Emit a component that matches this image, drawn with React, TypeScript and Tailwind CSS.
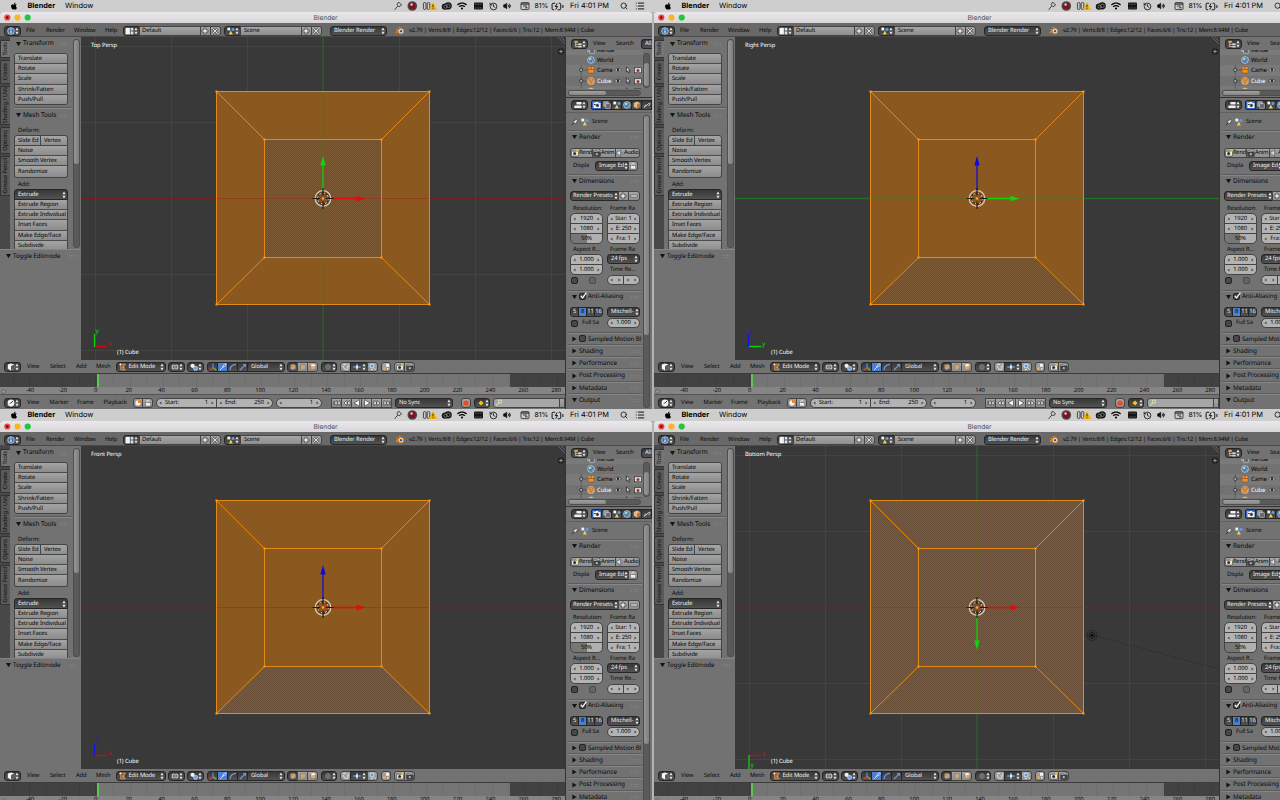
import React from "react";
import { FaApple, FaWifi } from "react-icons/fa";
import { Search, History, Volume2, List, BatteryCharging } from "lucide-react";

type View = "top" | "right" | "front" | "bottom";

const RED = "#e60a0a";
const GREEN = "#0ad80a";
const BLUE = "#0a0ae0";

/* ---------- small building blocks ---------- */

function Ico({ children, w = 8 }: { children: React.ReactNode; w?: number }) {
  return (
    <svg width={w} height={8} viewBox={`0 0 ${w} 8`} className="block shrink-0">
      {children}
    </svg>
  );
}

function UpDown() {
  return (
    <svg width={4} height={8} viewBox="0 0 4 8" className="ml-auto block shrink-0">
      <path d="M2 0.6L3.6 3.2H0.4ZM2 7.4L3.6 4.8H0.4Z" fill="#e4e4e4" />
    </svg>
  );
}

function Tri({ open = false }: { open?: boolean }) {
  return (
    <svg width={5} height={6} viewBox="0 0 5 6" className="block shrink-0">
      <path d={open ? "M0 1H5L2.5 5.2Z" : "M0.4 0.6V5.4L4.6 3Z"} fill="#141414" />
    </svg>
  );
}

function Dots() {
  return (
    <svg width={7} height={4} viewBox="0 0 7 4" className="ml-auto block shrink-0">
      <path d="M0 1.5H7M0 3.5H7" stroke="#8c8c8c" strokeWidth="0.7" strokeDasharray="1 1" />
    </svg>
  );
}

function Chevron({ right = false }: { right?: boolean }) {
  return (
    <svg width={3} height={4} viewBox="0 0 3 4" className="block shrink-0">
      <path d={right ? "M0.5 0.4V3.6L2.6 2Z" : "M2.5 0.4V3.6L0.4 2Z"} fill="#4c4c4c" />
    </svg>
  );
}

function Dark({ className, children }: { className: string; children?: React.ReactNode }) {
  return (
    <div
      className={`box-border flex h-[10px] shrink-0 items-center whitespace-nowrap border border-[#262626] bg-linear-to-b from-[#383838] to-[#525252] text-[#f0f0f0] ${className}`}
    >
      {children}
    </div>
  );
}

function Light({ className, children }: { className: string; children?: React.ReactNode }) {
  return (
    <div
      className={`box-border flex h-[10px] shrink-0 items-center whitespace-nowrap border border-[#444] bg-linear-to-b from-[#a6a6a6] to-[#8e8e8e] text-black ${className}`}
    >
      {children}
    </div>
  );
}

function Num({ label, value, className }: { label?: string; value: string; className: string }) {
  return (
    <div
      className={`box-border flex h-[10px] shrink-0 items-center whitespace-nowrap border border-[#444] bg-[#b3b3b3] px-[2px] text-black ${className}`}
    >
      <Chevron />
      {label ? <span className="ml-[3px]">{label}</span> : null}
      <span className={label ? "ml-auto mr-[3px]" : "mx-auto"}>{value}</span>
      <Chevron right />
    </div>
  );
}

function Check({ on = false, dim = false }: { on?: boolean; dim?: boolean }) {
  return (
    <div
      className={
        dim
          ? "flex h-[7px] w-[7px] shrink-0 rounded-[2px] border border-[#4a4a4a] bg-[#656565]"
          : "flex h-[7px] w-[7px] shrink-0 rounded-[2px] border border-[#222] bg-[#484848]"
      }
    >
      {on ? (
        <svg width={8} height={8} viewBox="0 0 8 8" className="-mt-[2px] block shrink-0 overflow-visible">
          <path d="M0.8 4L2.6 5.8L6.4 0.6" stroke="#fff" strokeWidth="1.2" fill="none" />
        </svg>
      ) : null}
    </div>
  );
}

/* ---------- icons ---------- */

const CameraIcon = () => (
  <Ico>
    <rect x="0.5" y="2.2" width="7" height="4.8" rx="0.6" fill="#e8e8e8" stroke="#222" strokeWidth="0.5" />
    <circle cx="3.6" cy="4.6" r="1.5" fill="#333" />
    <circle cx="6.4" cy="1.8" r="1.3" fill="#f2c018" />
  </Ico>
);
const RenderCam = () => (
  <Ico>
    <path d="M0.5 1V7H7.5V2H5.4V1H2.4V2H1.4V1Z" fill="#f4f4f4" />
    <circle cx="4.4" cy="4.4" r="1.6" fill="#333" stroke="#999" strokeWidth="0.5" />
    <rect x="1" y="3" width="1.6" height="1" fill="#333" />
  </Ico>
);
const ClapIcon = () => (
  <Ico>
    <path d="M0.6 1.8L7 0.6V2.2L0.8 3.2Z" fill="#ddd" stroke="#222" strokeWidth="0.5" />
    <rect x="0.8" y="3.2" width="6.4" height="4" fill="#444" stroke="#222" strokeWidth="0.5" />
    <circle cx="3.8" cy="5.2" r="1.1" fill="#bbb" />
  </Ico>
);
const SpeakerIcon = () => (
  <Ico>
    <path d="M0.6 2.8H2.4L4.6 0.8V7.2L2.4 5.2H0.6Z" fill="#e6e6e6" stroke="#333" strokeWidth="0.5" />
    <path d="M5.6 2.4Q6.8 4 5.6 5.6" stroke="#3f7ee0" strokeWidth="0.9" fill="none" />
  </Ico>
);
const SceneIcon = () => (
  <Ico>
    <rect x="0.4" y="0.6" width="2.8" height="2.8" fill="#f4f4f4" />
    <circle cx="6" cy="2.4" r="1.6" fill="#5a9ae8" />
    <path d="M3.8 3.6L5.8 7.4H1.8Z" fill="#f0d050" />
  </Ico>
);
const CubeIcon = () => (
  <Ico>
    <path d="M4 0.6L7.2 1.6V5.8L4 7.4L0.8 5.8V1.6Z" fill="#f6f6f6" />
    <path d="M4 3V7.4L7.2 5.8V1.6Z" fill="#5a5a5a" />
  </Ico>
);
const InfoIcon = () => (
  <Ico>
    <circle cx="4" cy="4" r="3.3" fill="#3c6fb6" stroke="#dfe8f5" strokeWidth="0.7" />
    <path d="M4 3.6V6M4 1.8V2.7" stroke="#fff" strokeWidth="1.1" />
  </Ico>
);
const ClockIcon = () => (
  <Ico>
    <circle cx="4" cy="4" r="3.4" fill="#f2f2f2" />
    <path d="M4 4L6 2" stroke="#222" strokeWidth="0.9" />
    <path d="M4 4L2.6 4.8" stroke="#c02020" strokeWidth="0.9" />
  </Ico>
);
const WorldIcon = () => (
  <Ico>
    <circle cx="4" cy="4" r="3.4" fill="#4f7fae" stroke="#c9d6e2" strokeWidth="0.7" />
    <path d="M2 2.4Q4 1 4.6 3Q3.4 4.6 2.2 4ZM5 4.6Q6.4 4.4 5.6 6Z" fill="#bfe0a8" />
  </Ico>
);
const OrangeCam = () => (
  <Ico>
    <circle cx="2.6" cy="2" r="1.6" fill="#f39a3c" stroke="#7a3c00" strokeWidth="0.4" />
    <circle cx="5.6" cy="2" r="1.6" fill="#f39a3c" stroke="#7a3c00" strokeWidth="0.4" />
    <rect x="1" y="3.4" width="6" height="3.6" fill="#ef8f2e" stroke="#7a3c00" strokeWidth="0.4" />
  </Ico>
);
const MeshIcon = () => (
  <Ico>
    <circle cx="4" cy="4" r="3.9" fill="#c9a684" />
    <path d="M1.2 1.8L6.8 1.8L4 7ZM1.2 1.8L4 4L6.8 1.8M4 4V7" stroke="#d9781a" strokeWidth="0.9" fill="none" />
  </Ico>
);
const OrangeCube = () => (
  <Ico>
    <path d="M4 0.6L7.2 2V5.8L4 7.4L0.8 5.8V2Z" fill="#e8b888" />
    <path d="M4 3.4V7.4L7.2 5.8V2Z" fill="#b8743c" />
  </Ico>
);
const Eye = () => (
  <Ico>
    <path d="M0.4 4Q4 0.4 7.6 4Q4 7 0.4 4Z" fill="#eee" stroke="#222" strokeWidth="0.6" />
    <circle cx="4" cy="3.8" r="1.3" fill="#222" />
  </Ico>
);
const Cursor = () => (
  <Ico>
    <path d="M2.4 0.8V6L3.7 5L4.8 7.2L5.8 6.6L4.8 4.6H6.2Z" fill="#ddd" stroke="#1a1a1a" strokeWidth="0.7" />
  </Ico>
);
const SmallCam = () => (
  <Ico>
    <rect x="0.6" y="1.8" width="6.8" height="5" fill="#ddd" stroke="#222" strokeWidth="0.6" />
    <circle cx="4" cy="4.4" r="1.5" fill="#8b3a30" />
  </Ico>
);
const Plus = () => (
  <Ico>
    <path d="M3 1H5V3H7V5H5V7H3V5H1V3H3Z" fill="#e6e6e6" stroke="#333" strokeWidth="0.6" />
  </Ico>
);
const Cross = () => (
  <Ico>
    <path d="M1.4 1.4L6.6 6.6M6.6 1.4L1.4 6.6" stroke="#333" strokeWidth="2.4" />
    <path d="M1.4 1.4L6.6 6.6M6.6 1.4L1.4 6.6" stroke="#e6e6e6" strokeWidth="1.2" />
  </Ico>
);
const LayoutIcon = () => (
  <Ico w={9}>
    <rect x="0.5" y="0.8" width="4.4" height="6.6" fill="#f2f2f2" />
    <rect x="5.6" y="0.8" width="2.8" height="2.8" fill="#ddd" />
    <rect x="5.6" y="4.4" width="2.8" height="3" fill="#ddd" />
  </Ico>
);
const TreeIcon = () => (
  <Ico>
    <rect x="0.4" y="0.8" width="3.4" height="2" fill="#f0a848" />
    <path d="M1.6 2.8V6.6H4M1.6 4.4H4" stroke="#ddd" strokeWidth="0.7" fill="none" />
    <rect x="4.2" y="3.4" width="3.4" height="1.6" fill="#ddd" />
    <rect x="4.2" y="5.8" width="3.4" height="1.6" fill="#ddd" />
  </Ico>
);
const PropsIcon = () => (
  <Ico>
    <rect x="2.4" y="1" width="5.2" height="2.4" rx="0.6" fill="#eee" />
    <rect x="0.4" y="4.6" width="7.2" height="2.4" rx="0.6" fill="#eee" />
  </Ico>
);
const LayersIcon = () => (
  <Ico>
    <rect x="0.8" y="0.8" width="4.4" height="4.4" fill="#8896a8" stroke="#ddd" strokeWidth="0.5" />
    <rect x="2.8" y="2.8" width="4.4" height="4.4" fill="#667" stroke="#ddd" strokeWidth="0.5" />
  </Ico>
);
const LinkIcon = () => (
  <Ico>
    <path d="M3.6 4.6L5.6 2.4Q6.8 1.6 7.2 2.8L5.4 5M4.4 3.6L2.2 5.6Q1 6.8 1.2 5.4L3 3.6" stroke="#ddd" strokeWidth="0.9" fill="none" />
  </Ico>
);
const PinIcon = () => (
  <Ico>
    <path d="M4.6 0.8L7.2 3.4L5.6 3.8L4.6 6L2 3.4L4.2 2.4Z" fill="#e6e6e6" stroke="#222" strokeWidth="0.5" />
    <path d="M3 5L0.8 7.2" stroke="#222" strokeWidth="0.8" />
  </Ico>
);
const LockIcon = () => (
  <Ico>
    <path d="M2.6 3.6V2.4Q4 0 5.4 2.4" stroke="#eee" strokeWidth="0.9" fill="none" />
    <rect x="1.4" y="3.6" width="5.2" height="3.4" fill="#eee" stroke="#444" strokeWidth="0.4" />
  </Ico>
);
const EditIcon = () => (
  <Ico>
    <path d="M1 1H6.6L4.4 4.4L6.4 7H1.8Z" fill="#8c6a48" stroke="#e8a060" strokeWidth="0.7" />
    <circle cx="1.3" cy="1.3" r="0.9" fill="#fff" />
    <circle cx="4.4" cy="4.4" r="0.9" fill="#f6a040" />
  </Ico>
);
const PivotIcon = () => (
  <Ico>
    <circle cx="2.6" cy="2.8" r="2.1" fill="#f0f0f0" />
    <circle cx="5.6" cy="5.4" r="2.1" fill="#6ba4ee" stroke="#fff" strokeWidth="0.5" />
  </Ico>
);
const ShadeIcon = () => (
  <Ico>
    <ellipse cx="4" cy="4" rx="3.4" ry="2.8" fill="#e4e4e4" />
    <path d="M0.8 4H7.2M4 1.2V6.8" stroke="#333" strokeWidth="0.6" />
    <ellipse cx="4" cy="4" rx="1.6" ry="2.8" fill="none" stroke="#333" strokeWidth="0.5" />
  </Ico>
);
const AxesIcon = () => (
  <Ico>
    <path d="M4 4.6V0.4" stroke="#4a86e8" strokeWidth="1.4" />
    <path d="M4 4.6L0.6 7.2" stroke="#e03a3a" strokeWidth="1.4" />
    <path d="M4 4.6L7.4 7.2" stroke="#4cc03c" strokeWidth="1.4" />
  </Ico>
);
const ArrowIcon = ({ c }: { c: string }) => (
  <Ico>
    <path d="M1 7L6 2" stroke={c} strokeWidth="1.1" />
    <path d="M3.6 1H7V4.4Z" fill={c} />
  </Ico>
);
const ManipIcon = () => (
  <Ico>
    <path d="M1 7L4.6 3.4" stroke="#dfeaff" strokeWidth="0.9" />
    <path d="M3.4 4.4L5.4 1L7.2 0.8L6.8 2.8Z" fill="none" stroke="#dfeaff" strokeWidth="0.7" />
  </Ico>
);
const ArcIcon = () => (
  <Ico>
    <path d="M1 7Q1.4 1.8 7 1.4" stroke="#6d9bd8" strokeWidth="1.2" fill="none" />
  </Ico>
);
const SelIcon = ({ mode }: { mode: number }) => (
  <Ico>
    <path d="M1.4 1.8L5 1L6.8 2.4V5.8L3.2 7L1.4 5.4Z" fill={mode === 2 ? "#e8a868" : "#b9a794"} stroke="#666" strokeWidth="0.5" />
    {mode === 0 ? <circle cx="3.2" cy="3" r="1.2" fill="#f08a20" /> : null}
    {mode === 1 ? <path d="M3.2 3V7" stroke="#f0a040" strokeWidth="1" /> : null}
    {mode === 2 ? <path d="M1.4 1.8L5 1L6.8 2.4L3.2 3.2Z" fill="#fff" /> : null}
  </Ico>
);
const MagnetIcon = () => (
  <Ico>
    <path d="M1.4 1.6L4 1.2M6.8 3.6L6.2 1.6M1.4 3Q2 7 5 6.4Q7.4 5 4.6 3.6" stroke="#ddd" strokeWidth="1.1" fill="none" />
  </Ico>
);
const SnapIcon = () => (
  <Ico>
    <path d="M4 0.8V7.2M0.2 4H7.8" stroke="#8fc0ff" strokeWidth="1" />
    <rect x="3" y="2.4" width="2" height="3.2" fill="#dceaff" />
  </Ico>
);
const SnapTarget = () => (
  <Ico>
    <circle cx="3" cy="3" r="2" fill="#5a96e6" stroke="#fff" strokeWidth="0.7" />
    <path d="M5 5L7 7M1.6 6.6H4" stroke="#eee" strokeWidth="0.8" />
  </Ico>
);
const PivotSquares = () => (
  <Ico>
    <rect x="4" y="0.8" width="3" height="3" fill="#f0f0f0" />
    <rect x="1" y="4.2" width="2.8" height="2.8" fill="#f0a050" />
    <circle cx="5.8" cy="5.8" r="0.9" fill="#eee" />
  </Ico>
);

/* ---------- macOS chrome ---------- */

function MenuBar() {
  return (
    <div className="flex h-[12px] shrink-0 items-center bg-[#cecece] pl-[10px] font-['Inter',sans-serif] text-[7.6px] leading-none tracking-normal text-black">
      <FaApple size={8} className="shrink-0" />
      <span className="ml-[9.5px] w-[37.5px] text-[7.3px] font-bold">Blender</span>
      <span className="w-[328px] text-[7.4px]">Window</span>
      <svg width={10} height={10} viewBox="0 0 10 10" className="block shrink-0">
        <path d="M5.6 1L8.6 4L6 5.8L4 3.8ZM4.8 5L1.6 8.8" fill="none" stroke="#222" strokeWidth="0.8" />
      </svg>
      <svg width={11} height={10} viewBox="0 0 11 10" className="ml-[4px] block shrink-0">
        <circle cx="5.3" cy="5" r="4.8" fill="#4c484a" />
        <circle cx="5.3" cy="5" r="3.2" fill="#7d1020" />
        <circle cx="4.6" cy="3.6" r="1.3" fill="#e9b4b4" />
      </svg>
      <svg width={16} height={10} viewBox="0 0 16 10" className="ml-[4px] block shrink-0">
        <rect x="1.4" y="1.6" width="2.6" height="6.8" rx="1" fill="none" stroke="#222" strokeWidth="0.8" />
        <rect x="5.2" y="1.6" width="2.6" height="6.8" rx="1" fill="none" stroke="#222" strokeWidth="0.8" />
        <path d="M11 1L15.2 9H6.8Z" fill="#f6b400" />
        <path d="M11 3.6V6.4M11 7.2V8.2" stroke="#222" strokeWidth="0.9" />
      </svg>
      <svg width={12} height={10} viewBox="0 0 12 10" className="ml-[2.5px] block shrink-0">
        <circle cx="4" cy="5.6" r="3.2" fill="#111" />
        <circle cx="7.2" cy="4.8" r="3.6" fill="#111" />
        <circle cx="7.4" cy="4.8" r="1.8" fill="none" stroke="#aaa" strokeWidth="0.6" />
        <circle cx="4.4" cy="5.6" r="1.6" fill="none" stroke="#aaa" strokeWidth="0.6" />
      </svg>
      <FaWifi size={10} className="ml-[4px] shrink-0" />
      <svg width={11} height={10} viewBox="0 0 11 10" className="ml-[6px] block shrink-0">
        <rect x="1" y="1.6" width="9" height="7" rx="1" fill="#141414" />
        <path d="M2 3.2H9M2 7H9" stroke="#999" strokeWidth="0.6" strokeDasharray="1 0.6" />
      </svg>
      <History size={9} className="ml-[5px] shrink-0" strokeWidth={2} />
      <Volume2 size={8} className="ml-[5px] shrink-0" strokeWidth={2} fill="#111" />
      <svg width={10} height={10} viewBox="0 0 10 10" className="ml-[9.5px] block shrink-0">
        <rect x="1" y="1.6" width="8" height="7" rx="0.8" fill="none" stroke="#222" strokeWidth="0.8" />
        <path d="M1 3H9" stroke="#222" strokeWidth="1.2" />
        <path d="M3 5H7M5 6.8H7.6" stroke="#222" strokeWidth="0.9" />
      </svg>
      <span className="ml-[4.5px] w-[15px] text-[6.9px]">81%</span>
      <BatteryCharging size={13} className="ml-[1px] shrink-0" strokeWidth={1.7} />
      <span className="ml-[6.5px] w-[50px] whitespace-nowrap text-[7.4px]">Fri 4:01 PM</span>
      <Search size={8} className="shrink-0" strokeWidth={2.2} />
      <List size={10} className="ml-[7px] shrink-0" strokeWidth={2.2} />
    </div>
  );
}

function TitleBar() {
  return (
    <div className="flex h-[11px] w-[652px] shrink-0 items-center rounded-t-[3px] bg-linear-to-b from-[#eae8ea] to-[#d8d6d8] pl-[4px]">
      <svg width={28} height={7} viewBox="0 0 28 7" className="block shrink-0">
        <circle cx="3.3" cy="3.5" r="3.1" fill="#f5443f" />
        <circle cx="3.3" cy="3.5" r="1.2" fill="#5c0604" />
        <circle cx="13.5" cy="3.5" r="3.1" fill="#fdb424" />
        <circle cx="23.7" cy="3.5" r="3.1" fill="#1fc73b" />
      </svg>
      <span className="ml-[281.5px] pt-px font-['Inter',sans-serif] text-[6.6px] leading-none tracking-normal text-[#555]">Blender</span>
    </div>
  );
}

function InfoHeader() {
  return (
    <div className="flex h-[14px] w-[652px] shrink-0 items-center border-b border-[#4a4a4a] bg-[#696969] pl-[4px] pt-[2px]">
      <Dark className="w-[17px] rounded-[3px] px-[1.5px]"><InfoIcon /><UpDown /></Dark>
      <span className="ml-[5px] w-[20px]">File</span>
      <span className="w-[28px]">Render</span>
      <span className="w-[31px]">Window</span>
      <span className="w-[18px]">Help</span>
      <Dark className="w-[17px] rounded-l-[3px] px-px"><LayoutIcon /><UpDown /></Dark>
      <Light className="-ml-px w-[62px] pl-[2px]">Default</Light>
      <Light className="-ml-px w-[11px]"><Plus /></Light>
      <Light className="-ml-px w-[11px] rounded-r-[3px]"><Cross /></Light>
      <Dark className="ml-[3px] w-[17px] rounded-l-[3px] px-[1.5px]"><SceneIcon /><UpDown /></Dark>
      <Light className="-ml-px w-[62px] pl-[3px]">Scene</Light>
      <Light className="-ml-px w-[11px]"><Plus /></Light>
      <Light className="-ml-px w-[11px] rounded-r-[3px]"><Cross /></Light>
      <Dark className="ml-[8px] w-[57px] rounded-[3px] pl-[3px] pr-px">Blender Render<UpDown /></Dark>
      <svg width={10} height={9} viewBox="0 0 10 9" className="ml-[8px] block shrink-0">
        <path d="M0.8 6.8L5 3.6H1.6M4 1.2L8 4" stroke="#f08418" strokeWidth="1.3" fill="none" />
        <circle cx="6" cy="5.2" r="3" fill="#f08418" />
        <circle cx="6" cy="5.2" r="2" fill="#fff" />
        <circle cx="6" cy="5.2" r="1.2" fill="#1e5aa8" />
      </svg>
      <span className="ml-[4px] whitespace-nowrap tracking-[-0.19px]">
        v2.79 | Verts:8/8 | Edges:12/12 | Faces:6/6 | Tris:12 | Mem:8.94M | Cube
      </span>
    </div>
  );
}

/* ---------- tool shelf ---------- */

function VTab({ label, className }: { label: string; className: string }) {
  return (
    <div className={`flex w-[10px] shrink-0 items-center justify-center rounded-l-[2px] border border-r-0 border-[#333] ${className}`}>
      <span className="rotate-180 whitespace-nowrap [writing-mode:vertical-rl]">{label}</span>
    </div>
  );
}

function Stack({ items, className }: { items: string[]; className: string }) {
  return (
    <div className={`flex w-[54px] flex-col overflow-hidden border border-[#444] ${className}`}>
      {items.map((t) => (
        <div
          key={t}
          className="box-border flex h-[10.2px] shrink-0 items-center whitespace-nowrap border-b border-[#4c4c4c] bg-linear-to-b from-[#a4a4a4] to-[#8c8c8c] pl-[3px] pt-[0.5px] text-black last:border-b-0"
        >
          {t}
        </div>
      ))}
    </div>
  );
}

function ToolShelf() {
  return (
    <div className="flex h-[323px] w-[81px] shrink-0 flex-col bg-[#727272]">
      <div className="flex h-[212px] overflow-hidden">
        <div className="flex w-[10px] shrink-0 flex-col gap-[2px] bg-[#484848] pt-[3px] text-[#0c0c0c]">
          <VTab label="Tools" className="h-[18px] bg-[#757575]" />
          <VTab label="Create" className="h-[24px] bg-[#5a5a5a]" />
          <VTab label="Shading / UVs" className="h-[39px] bg-[#5a5a5a]" />
          <VTab label="Options" className="h-[27px] bg-[#5a5a5a]" />
          <VTab label="Grease Pencil" className="h-[40px] bg-[#5a5a5a]" />
        </div>
        <div className="flex w-[63px] shrink-0 flex-col pl-[4px]">
          <div className="mt-[0.5px] flex h-[12px] shrink-0 items-center pl-[2px] pr-[6px] text-[6.5px]"><Tri open /><span className="ml-[2px]">Transform</span><Dots /></div>
          <Stack className="mt-[3.5px] h-[52px] shrink-0 rounded-[3px]" items={["Translate", "Rotate", "Scale", "Shrink/Fatten", "Push/Pull"]} />
          <div className="mt-[2px] h-[2px] w-[58px] shrink-0 border-b border-[#8a8a8a] bg-[#5a5a5a]" />
          <div className="mt-px flex h-[10px] shrink-0 items-center pl-[2px] pr-[6px] text-[6.5px]"><Tri open /><span className="ml-[2px] whitespace-nowrap">Mesh Tools</span><Dots /></div>
          <div className="mt-[6px] flex h-[9px] shrink-0 items-center pl-[4px]">Deform:</div>
          <div className="flex w-[54px] shrink-0">
            <Light className="h-[11px] w-[27px] rounded-tl-[3px] pl-[3px]">Slide Ed</Light>
            <Light className="-ml-px h-[11px] w-[28px] rounded-tr-[3px] pl-[3px]">Vertex</Light>
          </div>
          <Stack className="h-[32px] shrink-0 rounded-b-[3px] border-t-0" items={["Noise", "Smooth Vertex", "Randomize"]} />
          <div className="mt-[2px] flex h-[9px] shrink-0 items-center pl-[4px]">Add:</div>
          <Dark className="h-[11px] w-[54px] rounded-t-[3px] pl-[3px] pr-px">Extrude<UpDown /></Dark>
          <Stack
            className="h-[53px] shrink-0 border-t-0"
            items={["Extrude Region", "Extrude Individual", "Inset Faces", "Make Edge/Face", "Subdivide"]}
          />
        </div>
        <div className="mt-[2px] h-[209px] w-[7px] shrink-0 rounded-[3px] border border-[#4e4e4e] bg-[#5a5a5a]">
          <div className="h-[124px] rounded-[3px] bg-linear-to-r from-[#969696] to-[#7e7e7e]" />
        </div>
      </div>
      <div className="flex h-[13px] shrink-0 items-center border-t border-[#858585] pl-[6px] pr-[5px] text-[6.2px]"><Tri open /><span className="ml-[2px]">Toggle Editmode</span><Dots /></div>
    </div>
  );
}

/* ---------- 3D viewport ---------- */

const OUT = "216.5,91.5 429.5,91.5 429.5,304.5 216.5,304.5";
const IN = "264.5,139.5 381.5,139.5 381.5,257.5 264.5,257.5";
const LOWER = "264.5,257.5 381.5,257.5 429.5,304.5 216.5,304.5";
const GRID_X = [95, 171, 247, 399, 475, 551];
const GRID_Y = [46, 122, 274, 350];

const VIEWS: Record<View, { title: string; grid: boolean; h: string; v?: string; dim: string; up?: string; right: string; down?: string }> = {
  top: { title: "Top Persp", grid: true, h: "#702020", v: "#2a6a2a", dim: IN, up: GREEN, right: RED },
  right: { title: "Right Persp", grid: false, h: "#236e23", dim: LOWER, up: BLUE, right: GREEN },
  front: { title: "Front Persp", grid: false, h: "#7a1e1e", dim: LOWER, up: BLUE, right: RED },
  bottom: { title: "Bottom Persp", grid: true, h: "#7a1e1e", v: "#2a6a2a", dim: OUT, right: RED, down: GREEN },
};

function Viewport({ view }: { view: View }) {
  const s = VIEWS[view];
  const id = `dither-${view}`;
  return (
    <div className="relative h-[323px] w-[484px] shrink-0 overflow-hidden bg-[#393939]">
      <svg width={484} height={323} viewBox="81 37 484 323" className="block">
        <defs>
          <pattern id={id} width="2" height="2" patternUnits="userSpaceOnUse">
            <rect width="2" height="2" fill="#6a5038" />
            <rect width="1" height="1" fill="#7c5a36" />
            <rect x="1" y="1" width="1" height="1" fill="#7c5a36" />
          </pattern>
        </defs>
        {s.grid ? (
          <g stroke="#444" strokeWidth="1">
            {GRID_X.map((x) => <path key={x} d={`M${x + 0.5} 37V360`} />)}
            {GRID_Y.map((y) => <path key={y} d={`M81 ${y + 0.5}H565`} />)}
          </g>
        ) : null}
        <polygon points={OUT} fill="#8b5820" />
        <polygon points={s.dim} fill={`url(#${id})`} />
        <path d="M81 198.5H216M430 198.5H565" stroke={s.h} strokeWidth="1.3" />
        <path d="M216 198.5H430" stroke={view === "right" ? "#5d6a20" : "#963a1c"} opacity="0.8" />
        {s.v ? (
          <>
            <path d="M323 37V92M323 305V360" stroke={s.v} />
            <path d="M323 92V305" stroke="#5d6a20" opacity="0.8" />
          </>
        ) : null}
        {view === "bottom" ? (
          <g fill="none" stroke="#111">
            <path d="M442 227L565 260" strokeWidth="0.6" strokeDasharray="2 1.5" stroke="#222" />
            <circle cx="438" cy="226.5" r="5" strokeWidth="0.8" strokeDasharray="1.5 1" />
            <circle cx="438" cy="226.5" r="3" strokeWidth="0.8" />
            <circle cx="438" cy="226.5" r="1.2" fill="#000" />
          </g>
        ) : null}
        <g stroke="#e28a14" fill="none" strokeWidth="1">
          <polygon points={OUT} />
          <polygon points={IN} />
          <path d="M216.5 91.5L264.5 139.5M429.5 91.5L381.5 139.5M429.5 304.5L381.5 257.5M216.5 304.5L264.5 257.5" />
        </g>
        <g fill="#ff9a14">
          {[[216.5, 91.5], [429.5, 91.5], [429.5, 304.5], [216.5, 304.5], [264.5, 139.5], [381.5, 139.5], [381.5, 257.5], [264.5, 257.5]].map(
            ([x, y]) => <rect key={`${x}-${y}`} x={x - 1} y={y - 1} width="2" height="2" />,
          )}
        </g>
        {s.up ? <><path d="M323 190V165" stroke={s.up} strokeWidth="1.2" /><path d="M320.4 165.5L323 156L325.7 165.5Z" fill={s.up} /></> : null}
        {s.down ? <><path d="M323 206V232" stroke={s.down} strokeWidth="1.2" /><path d="M320.4 231.5L323 241L325.7 231.5Z" fill={s.down} /></> : null}
        <path d="M331 198.5H357" stroke={s.right} strokeWidth="1.5" />
        <path d="M356.5 195.8L365.5 198.5L356.5 201.2Z" fill={s.right} />
        <circle cx="323" cy="198.5" r="7.8" fill="none" stroke="#d8c8b0" strokeWidth="1.3" />
        <circle cx="323" cy="198.5" r="5.6" fill="none" stroke="#3a2a1c" strokeWidth="1.2" />
        <circle cx="323" cy="198.5" r="5.4" fill="none" stroke="#e8d8cc" strokeWidth="1" strokeDasharray="2 2.2" />
        <circle cx="323" cy="198.5" r="3.8" fill="none" stroke="#cc3a18" strokeWidth="1" strokeDasharray="1.6 1.4" />
        <path d="M312.5 198.5H320M326 198.5H333.5M323 188V195.5M323 201.5V209" stroke="#1c1c1c" strokeWidth="1.2" />
        <circle cx="323" cy="198.5" r="1.3" fill="#ffa824" />
        <MiniAxes view={view} />
        <circle cx="561" cy="51.5" r="3.2" fill="#242424" />
        <path d="M559.2 51.5H562.8M561 49.7V53.3" stroke="#aaa" strokeWidth="0.8" />
        <path d="M558 37L565 44M561 37L565 41" stroke="#777" strokeWidth="0.7" />
      </svg>
      <span className="absolute left-[10px] top-[6px] text-white">{s.title}</span>
      <span className="absolute bottom-[4px] left-[36px] text-white">(1) Cube</span>
    </div>
  );
}

function MiniAxes({ view }: { view: View }) {
  const cls = "font-['Noto_Sans',sans-serif] text-[6.5px]";
  if (view === "bottom") {
    return (
      <>
        <path d="M95 346.5H107" stroke="#cc0c0c" strokeWidth="1.3" />
        <path d="M95 346V360" stroke={GREEN} strokeWidth="1.2" />
        <text x="108" y="347" className={cls} fill="#d80c0c">x</text>
        <text x="96.5" y="358" className={cls} fill={GREEN}>y</text>
      </>
    );
  }
  const up = view === "top" ? GREEN : "#1414e6";
  const right = view === "right" ? GREEN : "#cc0c0c";
  return (
    <>
      <path d="M94 346.5H107.5" stroke={right} strokeWidth="1.3" />
      <path d="M94.5 347V334" stroke={up} strokeWidth="1.2" />
      <text x="108" y="346" className={cls} fill={right}>{view === "right" ? "y" : "x"}</text>
      <text x="95.5" y="333" className={cls} fill={up}>{view === "top" ? "y" : "z"}</text>
    </>
  );
}

function ViewHeader() {
  return (
    <div className="flex h-[14px] shrink-0 items-center border-b border-[#3c3c3c] bg-[#727272] pl-[4px] pt-[0.5px]">
      <Dark className="w-[17px] rounded-[3px] px-[1.5px]"><CubeIcon /><UpDown /></Dark>
      <span className="ml-[6px] w-[23px]">View</span>
      <span className="w-[26px]">Select</span>
      <span className="w-[20px]">Add</span>
      <span className="w-[20px]">Mesh</span>
      <Dark className="w-[50px] rounded-[3px] px-[1.5px]"><EditIcon /><span className="ml-[2px]">Edit Mode</span><UpDown /></Dark>
      <Dark className="ml-[2px] w-[17px] rounded-[3px] px-[1.5px]"><ShadeIcon /><UpDown /></Dark>
      <Dark className="ml-[2px] w-[17px] rounded-[3px] px-[1.5px]"><PivotIcon /><UpDown /></Dark>
      <Dark className="ml-[3px] w-[11px] rounded-l-[3px] px-[0.5px]"><AxesIcon /></Dark>
      <div className="-ml-px flex h-[10px] w-[11px] shrink-0 items-center border border-[#262626] bg-[#4f7fd0] px-[0.5px]"><ManipIcon /></div>
      <Dark className="-ml-px w-[11px] px-[0.5px]"><ArcIcon /></Dark>
      <Dark className="-ml-px w-[11px] px-[0.5px]"><ArrowIcon c="#6d9bd8" /></Dark>
      <Dark className="-ml-px w-[38px] rounded-r-[3px] pl-[3px] pr-px">Global<UpDown /></Dark>
      <Dark className="ml-[2px] w-[11px] rounded-l-[3px] border-[#3e3e3e] from-[#555] to-[#666] px-[0.5px]"><SelIcon mode={0} /></Dark>
      <Light className="-ml-px w-[11px] px-[0.5px]"><SelIcon mode={1} /></Light>
      <Light className="-ml-px w-[11px] rounded-r-[3px] px-[0.5px]"><SelIcon mode={2} /></Light>
      <Dark className="ml-[3px] w-[16px] rounded-[3px] px-[1.5px]">
        <Ico><circle cx="4" cy="4" r="2.4" fill="#6a6a6a" stroke="#888" strokeWidth="0.7" /></Ico><UpDown />
      </Dark>
      <Light className="ml-[3px] w-[11px] rounded-l-[3px] px-[0.5px]"><MagnetIcon /></Light>
      <Dark className="-ml-px w-[18px] px-[1.5px]"><SnapIcon /><UpDown /></Dark>
      <Light className="-ml-px w-[11px] rounded-r-[3px] px-[0.5px]"><SnapTarget /></Light>
      <Light className="ml-[3px] w-[10px] rounded-[3px]"><PivotSquares /></Light>
      <Light className="ml-[3px] w-[11px] rounded-l-[3px] px-[0.5px]"><CameraIcon /></Light>
      <Light className="-ml-px w-[11px] rounded-r-[3px] px-[0.5px]"><ClapIcon /></Light>
    </div>
  );
}

/* ---------- timeline ---------- */

const FRAMES = [-40, -20, 0, 20, 40, 60, 80, 100, 120, 140, 160, 180, 200, 220, 240, 260, 280];

function Timeline() {
  return (
    <div className="flex h-[21px] shrink-0 flex-col overflow-hidden">
      <div className="flex h-[13px] w-[565px]">
        <div className="w-[97px] bg-[#424242] bg-[repeating-linear-gradient(90deg,transparent_0_13px,#3c3c3c_13px_14px,transparent_14px_16.45px)]" />
        <div className="w-[2px] bg-[#5cc850]" />
        <div className="w-[411px] bg-[#757575] bg-[repeating-linear-gradient(90deg,transparent_0_14.4px,#6e6e6e_14.4px_15.4px,transparent_15.4px_16.45px)]" />
        <div className="w-[55px] bg-[#424242] bg-[repeating-linear-gradient(90deg,transparent_0_14px,#3c3c3c_14px_15px,transparent_15px_16.45px)]" />
      </div>
      <div className="flex h-[8px] items-center border-b border-[#555] bg-[#858585] pl-[1px] pt-px text-[#0c0c0c]">
        <svg width={5} height={5} viewBox="0 0 5 5" className="mr-[7.5px] block shrink-0">
          <circle cx="2.5" cy="2.5" r="1.9" fill="#999" stroke="#555" strokeWidth="0.7" />
        </svg>
        {FRAMES.map((f) => (
          <span key={f} className="w-[32.9px] shrink-0 text-center">{f}</span>
        ))}
      </div>
    </div>
  );
}

const PLAY = [
  "M1 1.5V6.5M4 1.5L1.4 4L4 6.5ZM7 1.5L4.4 4L7 6.5Z",
  "M4 1.5L1 4L4 6.5ZM7 1.5L4 4L7 6.5Z",
  "M6.4 0.6L1.2 4L6.4 7.4Z",
  "M1.6 0.6L6.8 4L1.6 7.4Z",
  "M1 1.5L4 4L1 6.5ZM4 1.5L7 4L4 6.5Z",
  "M7 1.5V6.5M1 1.5L3.6 4L1 6.5ZM4 1.5L6.6 4L4 6.5Z",
];

function TimelineHeader() {
  return (
    <div className="flex h-[14px] shrink-0 items-center overflow-hidden bg-[#727272] pl-[4px] pt-px">
      <Dark className="w-[17px] rounded-[3px] px-[1.5px]"><ClockIcon /><UpDown /></Dark>
      <span className="ml-[6px] w-[23px]">View</span>
      <span className="w-[28px]">Marker</span>
      <span className="w-[27px]">Frame</span>
      <span className="w-[30px]">Playback</span>
      <Light className="w-[10px] rounded-l-[3px]"><Ico><circle cx="4" cy="4" r="3.2" fill="#f4f4f4" stroke="#444" strokeWidth="0.5" /><path d="M4 4V0.8A3.2 3.2 0 0 1 7.2 4Z" fill="#f08a20" /></Ico></Light>
      <Light className="-ml-px w-[11px] rounded-r-[3px] px-[0.5px]"><LockIcon /></Light>
      <Num label="Start:" value="1" className="ml-[3px] w-[61px] rounded-l-full" />
      <Num label="End:" value="250" className="-ml-px w-[57px] rounded-r-full" />
      <Num label=" " value="1" className="ml-[3px] w-[46px] rounded-full" />
      <div className="ml-[9px] flex">
        {PLAY.map((d) => (
          <Light key={d} className="-mr-px w-[11px] px-[0.5px]">
            <Ico><path d={d} fill="#fff" stroke="#222" strokeWidth="0.6" /></Ico>
          </Light>
        ))}
      </div>
      <Dark className="ml-[4px] w-[58px] rounded-[3px] pl-[3px] pr-px">No Sync<UpDown /></Dark>
      <Light className="ml-[8px] w-[10px] rounded-[3px]"><Ico><circle cx="4" cy="4" r="2.6" fill="#f04a1c" /></Ico></Light>
      <Dark className="ml-[3px] w-[16px] rounded-[3px] px-[1.5px]"><Ico><path d="M4 1.4L6.6 4L4 6.6L1.4 4Z" fill="#f5c518" /></Ico><UpDown /></Dark>
      <div className="ml-[3px] flex h-[10px] w-[67px] shrink-0 items-center rounded-l-[3px] border border-[#444] bg-[#a6a6a6] pl-px">
        <Ico><circle cx="5" cy="2.6" r="1.7" fill="none" stroke="#e8e0b0" strokeWidth="1" /><path d="M3.8 3.8L1 6.8" stroke="#f0e8b8" strokeWidth="1" /></Ico>
      </div>
      <Light className="-ml-px w-[6px] from-[#909090]" />
    </div>
  );
}

/* ---------- right column ---------- */

function TreeRow({ icon, label, toggles, white, striped }: { icon: React.ReactNode; label: string; toggles?: boolean; white?: boolean; striped?: boolean }) {
  return (
    <div className={`flex h-[10.2px] shrink-0 items-center pl-[13px] ${striped ? "bg-[#7a7a7a]" : "bg-[#727272]"}`}>
      <svg width={8} height={10} viewBox="0 0 8 10" className="block shrink-0">
        {toggles ? (
          <>
            <path d="M2.2 0V10M4 5H8" stroke="#4a4a4a" strokeWidth="0.6" />
            <circle cx="2.2" cy="5" r="1.6" fill="#aaa" stroke="#222" strokeWidth="0.7" />
          </>
        ) : null}
      </svg>
      {icon}
      <span className={`ml-[2px] w-[17px] whitespace-nowrap text-[6px] ${white ? "text-white" : "text-black"}`}>{label}</span>
      {toggles ? <div className="flex gap-[2px]"><Eye /><Cursor /><SmallCam /></div> : null}
    </div>
  );
}

function Outliner() {
  return (
    <div className="flex h-[61px] shrink-0 flex-col overflow-hidden border-b border-[#333] bg-[#727272]">
      <div className="flex h-[13px] shrink-0 items-center pl-[5px] pt-px">
        <Dark className="w-[17px] rounded-[3px] px-[1.5px]"><TreeIcon /><UpDown /></Dark>
        <span className="ml-[5px] w-[23px]">View</span>
        <span className="w-[25px]">Search</span>
        <Dark className="w-[11px] rounded-l-[3px] border-r-0 pl-[3px]">All</Dark>
      </div>
      <div className="flex h-[39px] shrink-0 overflow-hidden">
        <div className="flex w-[77px] flex-col overflow-hidden">
          <div className="-mt-[5px] flex flex-col">
            <TreeRow icon={<LayersIcon />} label="Rende" striped />
            <TreeRow icon={<WorldIcon />} label="World" />
            <TreeRow icon={<OrangeCam />} label="Came" toggles striped />
            <TreeRow icon={<MeshIcon />} label="Cube" toggles white />
            <TreeRow icon={<OrangeCube />} label="" toggles striped />
          </div>
        </div>
        <div className="mt-[3px] h-[35px] w-[7px] rounded-[3px] border border-[#4e4e4e] bg-[#5a5a5a] pt-[9px]">
          <div className="h-[23px] rounded-[3px] bg-linear-to-r from-[#989898] to-[#808080]" />
        </div>
      </div>
      <div className="ml-[2px] mt-px h-[6px] w-[73px] shrink-0 rounded-[3px] border border-[#4e4e4e] bg-[#5a5a5a]">
        <div className="h-[4px] w-[37px] rounded-[3px] bg-linear-to-b from-[#a0a0a0] to-[#868686]" />
      </div>
    </div>
  );
}

const Sep = () => <div className="h-[2px] w-[74px] shrink-0 border-b border-[#868686] bg-[#5c5c5c]" />;

function Closed({ label, check }: { label: string; check?: boolean }) {
  return (
    <>
      <div className={`flex h-[10.3px] w-[74px] shrink-0 items-center whitespace-nowrap pl-[4px] pr-[4px] ${check ? "text-[6.2px]" : "text-[6.4px]"}`}>
        <Tri />
        {check ? <div className="ml-[2px]"><Check /></div> : null}
        <span className="ml-[2px]">{label}</span>
        {check ? null : <Dots />}
      </div>
      <Sep />
    </>
  );
}

function Open({ label }: { label: string }) {
  return (
    <div className="flex h-[10px] w-[74px] shrink-0 items-center pl-[4px] pr-[4px] text-[6.5px]">
      <Tri open /><span className="ml-[2px]">{label}</span><Dots />
    </div>
  );
}

function Properties() {
  const tabs = [<LayersIcon />, <SceneIcon />, <WorldIcon />, <OrangeCube />, <LinkIcon />];
  return (
    <div className="flex h-[311px] flex-col overflow-hidden bg-[#727272]">
      <div className="flex h-[15px] shrink-0 items-center border-b border-[#606060] pl-[5px]">
        <Dark className="w-[17px] rounded-[3px] px-[1.5px]"><PropsIcon /><UpDown /></Dark>
        <div className="ml-[3px] flex h-[10px] w-[11px] shrink-0 items-center rounded-l-[2px] border border-[#262626] bg-[#2f66c0] px-[0.5px]"><RenderCam /></div>
        {tabs.map((t, i) => <Dark key={i} className="-ml-px w-[11px] from-[#4a4a4a] to-[#5a5a5a] px-[0.5px]">{t}</Dark>)}
      </div>
      <div className="flex">
        <div className="flex w-[77px] shrink-0 flex-col pl-[2px]">
          <div className="mt-[3.5px] flex h-[10px] items-center pl-[3px]"><PinIcon /><div className="ml-[2px]"><SceneIcon /></div><span className="ml-[3px]">Scene</span></div>
          <div className="mt-[3.5px]"><Sep /></div>
          <Open label="Render" />
          <div className="mt-[5.5px] flex pl-[2px]">
            <Light className="w-[23px] rounded-l-[3px] tracking-[-0.25px]"><CameraIcon /><span>Rend</span></Light>
            <Light className="-ml-px w-[24px] tracking-[-0.25px]"><ClapIcon /><span>Anim</span></Light>
            <Light className="-ml-px w-[25px] rounded-r-[3px] tracking-[-0.25px]"><SpeakerIcon /><span>Audio</span></Light>
          </div>
          <div className="mt-[3.5px] flex h-[10px] items-center pl-[5px]">
            <span className="w-[22px]">Displa</span>
            <Dark className="w-[34px] rounded-l-[3px] pl-[3px]">Image Ed<UpDown /></Dark>
            <Light className="-ml-px w-[10px] rounded-r-[3px]"><LockIcon /></Light>
          </div>
          <div className="mt-[3px]"><Sep /></div>
          <Open label="Dimensions" />
          <div className="mt-[5px] flex pl-[2px]">
            <Dark className="w-[49px] rounded-l-[3px] pl-[2px]">Render Presets<UpDown /></Dark>
            <Light className="-ml-px w-[11px]"><Plus /></Light>
            <Light className="-ml-px w-[12px] rounded-r-[3px] pl-px"><Ico><rect x="0.8" y="3" width="6.4" height="2" fill="#e6e6e6" stroke="#333" strokeWidth="0.5" /></Ico></Light>
          </div>
          <div className="mt-[3px] flex h-[9px] items-center pl-[5px] pt-[0.5px]"><span className="w-[37px]">Resolution:</span><span>Frame Ra</span></div>
          <div className="flex gap-[4px] pl-[2px]">
            <div className="flex w-[33px] flex-col">
              <Num value="1920" className="h-[11px] w-[33px] rounded-t-[5px]" />
              <Num value="1080" className="-mt-px h-[11px] w-[33px]" />
              <div className="-mt-px flex h-[11px] w-[33px] items-center justify-center rounded-b-[5px] border border-[#444] bg-[linear-gradient(90deg,#777_50%,#b0b0b0_50%)] text-black">50%</div>
            </div>
            <div className="flex w-[33px] flex-col">
              <Num value="Star: 1" className="h-[11px] w-[33px] rounded-t-[5px]" />
              <Num value="E: 250" className="-mt-px h-[11px] w-[33px]" />
              <Num value="Fra:  1" className="-mt-px h-[11px] w-[33px] rounded-b-[5px]" />
            </div>
          </div>
          <div className="mt-px flex h-[9px] items-center whitespace-nowrap pl-[5px]"><span className="w-[37px]">Aspect R...</span><span>Frame Ra</span></div>
          <div className="flex gap-[4px] pl-[2px]">
            <div className="flex w-[33px] flex-col">
              <Num value="1.000" className="h-[11px] w-[33px] rounded-t-[5px]" />
              <Num value="1.000" className="-mt-px h-[11px] w-[33px] rounded-b-[5px]" />
              <div className="mt-[2px] flex gap-[11px] pl-px"><Check /><Check dim /></div>
            </div>
            <div className="flex w-[33px] flex-col">
              <Dark className="w-[33px] rounded-[3px] pl-[3px] pr-px">24 fps<UpDown /></Dark>
              <span className="mt-px flex h-[10px] items-center whitespace-nowrap pl-[3px]">Time Re...</span>
              <div className="flex">
                <Num value="" className="w-[17px] rounded-l-full" />
                <Num value="" className="-ml-px w-[17px] rounded-r-full" />
              </div>
            </div>
          </div>
          <div className="mt-[4.5px]"><Sep /></div>
          <div className="flex h-[10px] w-[74px] items-center pl-[4px] pr-[4px] text-[6.2px]">
            <Tri open /><div className="ml-[2px]"><Check on /></div><span className="ml-[2px]">Anti-Aliasing</span><Dots />
          </div>
          <div className="mt-[5px] flex pl-[2px]">
            <Dark className="w-[9px] justify-center rounded-l-[3px]">5</Dark>
            <div className="-ml-px flex h-[10px] w-[9px] shrink-0 items-center justify-center border border-[#262626] bg-[#4f7fd0] text-black">8</div>
            <Dark className="-ml-px w-[9px] justify-center">11</Dark>
            <Dark className="-ml-px w-[9px] justify-center rounded-r-[3px]">16</Dark>
            <Dark className="ml-[4px] w-[33px] rounded-[3px] pl-[3px]">Mitchell-<UpDown /></Dark>
          </div>
          <div className="mt-[1.5px] flex h-[10px] items-center pl-[3px]">
            <Check /><span className="ml-[4px] w-[25px]">Full Sa</span>
            <Num value="1.000" className="w-[33px] rounded-full" />
          </div>
          <div className="mt-[3.5px]"><Sep /></div>
          <Closed label="Sampled Motion Bl" check />
          <Closed label="Shading" />
          <Closed label="Performance" />
          <Closed label="Post Processing" />
          <Closed label="Metadata" />
          <Open label="Output" />
        </div>
        <div className="mt-[2px] h-[293px] w-[7px] shrink-0 rounded-[3px] border border-[#4e4e4e] bg-[#5a5a5a]">
          <div className="h-[219px] rounded-[3px] bg-linear-to-r from-[#969696] to-[#808080]" />
        </div>
      </div>
    </div>
  );
}

/* ---------- window ---------- */

function BlenderScreen({ view }: { view: View }) {
  return (
    <div className="flex h-[409px] w-[654px] flex-col overflow-hidden bg-[#b4b4b4]">
      <MenuBar />
      <TitleBar />
      <InfoHeader />
      <div className="flex h-[372px]">
        <div className="flex w-[565px] shrink-0 flex-col">
          <div className="flex">
            <ToolShelf />
            <Viewport view={view} />
          </div>
          <ViewHeader />
          <Timeline />
          <TimelineHeader />
        </div>
        <div className="flex w-[87px] shrink-0 flex-col overflow-hidden border-l border-[#333]">
          <Outliner />
          <Properties />
        </div>
      </div>
    </div>
  );
}

export default function App() {
  return (
    <div className="h-[800px] w-[1280px] overflow-hidden font-['Noto_Sans','Open_Sans',sans-serif] text-[5.8px] leading-none tracking-[-0.1px] text-[#080808] [text-rendering:geometricPrecision]">
      <div className="grid w-[1308px] grid-cols-[654px_654px]">
        <BlenderScreen view="top" />
        <BlenderScreen view="right" />
        <BlenderScreen view="front" />
        <BlenderScreen view="bottom" />
      </div>
    </div>
  );
}
